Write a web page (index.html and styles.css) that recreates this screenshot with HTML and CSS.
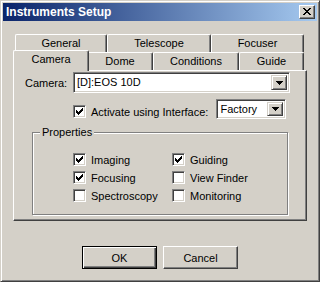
FILE: index.html
```html
<!DOCTYPE html>
<html lang="en">
  <head>
    <meta charset="UTF-8" />
    <title>Instruments Setup</title>
    <link rel="stylesheet" href="styles.css">
  </head>
  <body>
    <div class="window">
      <!-- Caption -->
      <div class="titlebar">
        <span class="title">Instruments Setup</span>
        <div class="close-btn">
          <svg width="8" height="7" viewBox="0 0 8 7"><path d="M0 0h2v1H0zM6 0h2v1H6zM1 1h2v1H1zM5 1h2v1H5zM2 2h4v1H2zM3 3h2v1H3zM2 4h4v1H2zM1 5h2v1H1zM5 5h2v1H5zM0 6h2v1H0zM6 6h2v1H6z" fill="#000"/></svg>
        </div>
      </div>

      <div class="content">
        <!-- Tab strip, two rows -->
        <div class="tabs">
          <div class="tab-row">
            <div class="tab tab-general">General</div>
            <div class="tab tab-telescope">Telescope</div>
            <div class="tab tab-focuser">Focuser</div>
          </div>
          <div class="tab-row">
            <div class="tab tab-camera active">Camera</div>
            <div class="tab tab-dome">Dome</div>
            <div class="tab tab-conditions">Conditions</div>
            <div class="tab tab-guide">Guide</div>
          </div>
        </div>

        <div class="panel">
          <div class="form-row">
            <span class="form-label">Camera:</span>
            <div class="combo combo-camera">
              <span class="combo-text">[D]:EOS 10D</span>
              <span class="combo-btn"><svg width="7" height="4" viewBox="0 0 7 4"><path d="M0 0h7v1H0zM1 1h5v1H1zM2 2h3v1H2zM3 3h1v1H3z" fill="#000"/></svg></span>
            </div>
          </div>

          <div class="form-row activate-row">
            <span class="form-label"></span>
            <label class="check-item">
              <span class="check"><svg width="7" height="7" viewBox="0 0 7 7"><path d="M0 2h1v3H0zM1 3h1v3H1zM2 4h1v3H2zM3 3h1v3H3zM4 2h1v3H4zM5 1h1v3H5zM6 0h1v3H6z" fill="#000"/></svg></span>
              <span>Activate using Interface:</span>
            </label>
            <div class="combo combo-iface">
              <span class="combo-text">Factory</span>
              <span class="combo-btn"><svg width="7" height="4" viewBox="0 0 7 4"><path d="M0 0h7v1H0zM1 1h5v1H1zM2 2h3v1H2zM3 3h1v1H3z" fill="#000"/></svg></span>
            </div>
          </div>

          <fieldset class="group">
            <legend>Properties</legend>
            <div class="props">
              <label class="check-item">
                <span class="check"><svg width="7" height="7" viewBox="0 0 7 7"><path d="M0 2h1v3H0zM1 3h1v3H1zM2 4h1v3H2zM3 3h1v3H3zM4 2h1v3H4zM5 1h1v3H5zM6 0h1v3H6z" fill="#000"/></svg></span>
                <span>Imaging</span>
              </label>
              <label class="check-item">
                <span class="check"><svg width="7" height="7" viewBox="0 0 7 7"><path d="M0 2h1v3H0zM1 3h1v3H1zM2 4h1v3H2zM3 3h1v3H3zM4 2h1v3H4zM5 1h1v3H5zM6 0h1v3H6z" fill="#000"/></svg></span>
                <span>Guiding</span>
              </label>
              <label class="check-item">
                <span class="check"><svg width="7" height="7" viewBox="0 0 7 7"><path d="M0 2h1v3H0zM1 3h1v3H1zM2 4h1v3H2zM3 3h1v3H3zM4 2h1v3H4zM5 1h1v3H5zM6 0h1v3H6z" fill="#000"/></svg></span>
                <span>Focusing</span>
              </label>
              <label class="check-item">
                <span class="check"></span>
                <span>View Finder</span>
              </label>
              <label class="check-item">
                <span class="check"></span>
                <span>Spectroscopy</span>
              </label>
              <label class="check-item">
                <span class="check"></span>
                <span>Monitoring</span>
              </label>
            </div>
          </fieldset>
        </div>

        <!-- Dialog buttons -->
        <div class="buttons">
          <div class="push-btn default">OK</div>
          <div class="push-btn">Cancel</div>
        </div>
      </div>
    </div>
  </body>
</html>
```

FILE: styles.css
```css
body {
  margin: 0;
  padding: 0;
  font-family: "Liberation Sans", Arial, sans-serif;
  font-size: 11px;
  color: #000;
}

.window {
  width: 320px;
  height: 282px;
  box-sizing: border-box;
  background-color: #d4d0c8;
  border: 1px solid;
  border-color: #d4d0c8 #404040 #404040 #d4d0c8;
  box-shadow: inset 1px 1px #fff, inset -1px -1px #808080;
  padding: 2px;
  display: flex;
  flex-direction: column;
}

.titlebar {
  height: 18px;
  flex-shrink: 0;
  background: linear-gradient(to right, #0a246a, #a6caf0);
  display: flex;
  align-items: center;
  justify-content: space-between;
  padding: 0 2px 0 3px;
}

.title {
  color: #fff;
  font-weight: bold;
  font-size: 12px;
}

.close-btn {
  width: 16px;
  height: 14px;
  box-sizing: border-box;
  background-color: #d4d0c8;
  border: 1px solid;
  border-color: #fff #404040 #404040 #fff;
  box-shadow: inset -1px -1px #808080;
  display: flex;
  align-items: center;
  justify-content: center;
}

.close-btn svg {
  display: block;
  margin: 0 1px 1px 0;
}

.content {
  flex: 1;
  padding: 13px 10px 0;
  display: flex;
  flex-direction: column;
}

/* tabs */
.tabs {
  display: flex;
  flex-direction: column;
}

.tab-row {
  display: flex;
  align-items: flex-start;
  height: 18px;
  padding-left: 2px;
}

.tab {
  box-sizing: border-box;
  height: 18px;
  border: 1px solid;
  border-color: #fff #404040 transparent #fff;
  border-bottom: 0;
  border-radius: 2px 2px 0 0;
  box-shadow: inset -1px 0 #808080;
  background-color: #d4d0c8;
  text-align: center;
  line-height: 17px;
  white-space: nowrap;
}

.tab-general { width: 92px; }
.tab-telescope { width: 104px; }
.tab-focuser { width: 93px; }
.tab-camera { width: 72px; }
.tab-dome { width: 66px; }
.tab-conditions { width: 86px; }
.tab-guide { width: 65px; }

.tab.active {
  width: 76px;
  height: 21px;
  margin: -2px -2px 0;
  line-height: 17px;
  position: relative;
  z-index: 1;
}

.panel {
  height: 151px;
  box-sizing: border-box;
  border: 1px solid;
  border-color: #fff #404040 #404040 #fff;
  box-shadow: inset -1px -1px #808080;
  padding: 1px 0 0 11px;
}

.form-row {
  display: flex;
  align-items: center;
}

.form-label {
  width: 48px;
  flex-shrink: 0;
}

.activate-row {
  margin-top: 6px;
  align-items: flex-start;
}

.activate-row .check-item {
  margin-top: 6px;
}

/* combo boxes */
.combo {
  box-sizing: border-box;
  display: flex;
  background-color: #fff;
  border: 1px solid;
  border-color: #808080 #fff #fff #808080;
  box-shadow: inset 1px 1px #404040, inset -1px -1px #d4d0c8;
  padding: 2px;
}

.combo-camera {
  width: 217px;
  height: 21px;
}

.combo-iface {
  width: 70px;
  height: 20px;
  margin-left: 8px;
}

.combo-text {
  flex: 1;
  padding-left: 1px;
  line-height: 15px;
}

.combo-btn {
  width: 16px;
  box-sizing: border-box;
  background-color: #d4d0c8;
  border: 1px solid;
  border-color: #d4d0c8 #404040 #404040 #d4d0c8;
  box-shadow: inset 1px 1px #fff, inset -1px -1px #808080;
  display: flex;
  align-items: center;
  justify-content: center;
}

/* checkboxes */
.check-item {
  display: flex;
  align-items: center;
  gap: 5px;
  height: 13px;
}

.check {
  width: 13px;
  height: 13px;
  box-sizing: border-box;
  background-color: #fff;
  border: 1px solid;
  border-color: #808080 #fff #fff #808080;
  box-shadow: inset 1px 1px #404040, inset -1px -1px #d4d0c8;
  display: flex;
  align-items: center;
  justify-content: center;
}

.check svg {
  display: block;
}

/* group box */
.group {
  width: 256px;
  height: 89px;
  box-sizing: border-box;
  margin: 7px 0 0 7px;
  padding: 0;
  border: 1px solid #808080;
  box-shadow: inset 1px 1px #fff, 1px 1px #fff;
  min-inline-size: 0;
}

.group legend {
  margin-left: 7px;
  padding: 0 2px;
  background-color: #d4d0c8;
  line-height: 13px;
}

.props {
  display: grid;
  grid-template-columns: 99px auto;
  row-gap: 5px;
  padding: 14px 0 0 40px;
}

/* buttons */
.buttons {
  display: flex;
  justify-content: center;
  gap: 6px;
  margin-top: 25px;
}

.push-btn {
  width: 75px;
  height: 23px;
  box-sizing: border-box;
  border: 1px solid;
  border-color: #fff #404040 #404040 #fff;
  box-shadow: inset -1px -1px #808080;
  display: flex;
  align-items: center;
  justify-content: center;
}

.push-btn.default {
  border-color: #000;
  box-shadow: inset 1px 1px #fff, inset -1px -1px #404040, inset -2px -2px #808080;
}
```
